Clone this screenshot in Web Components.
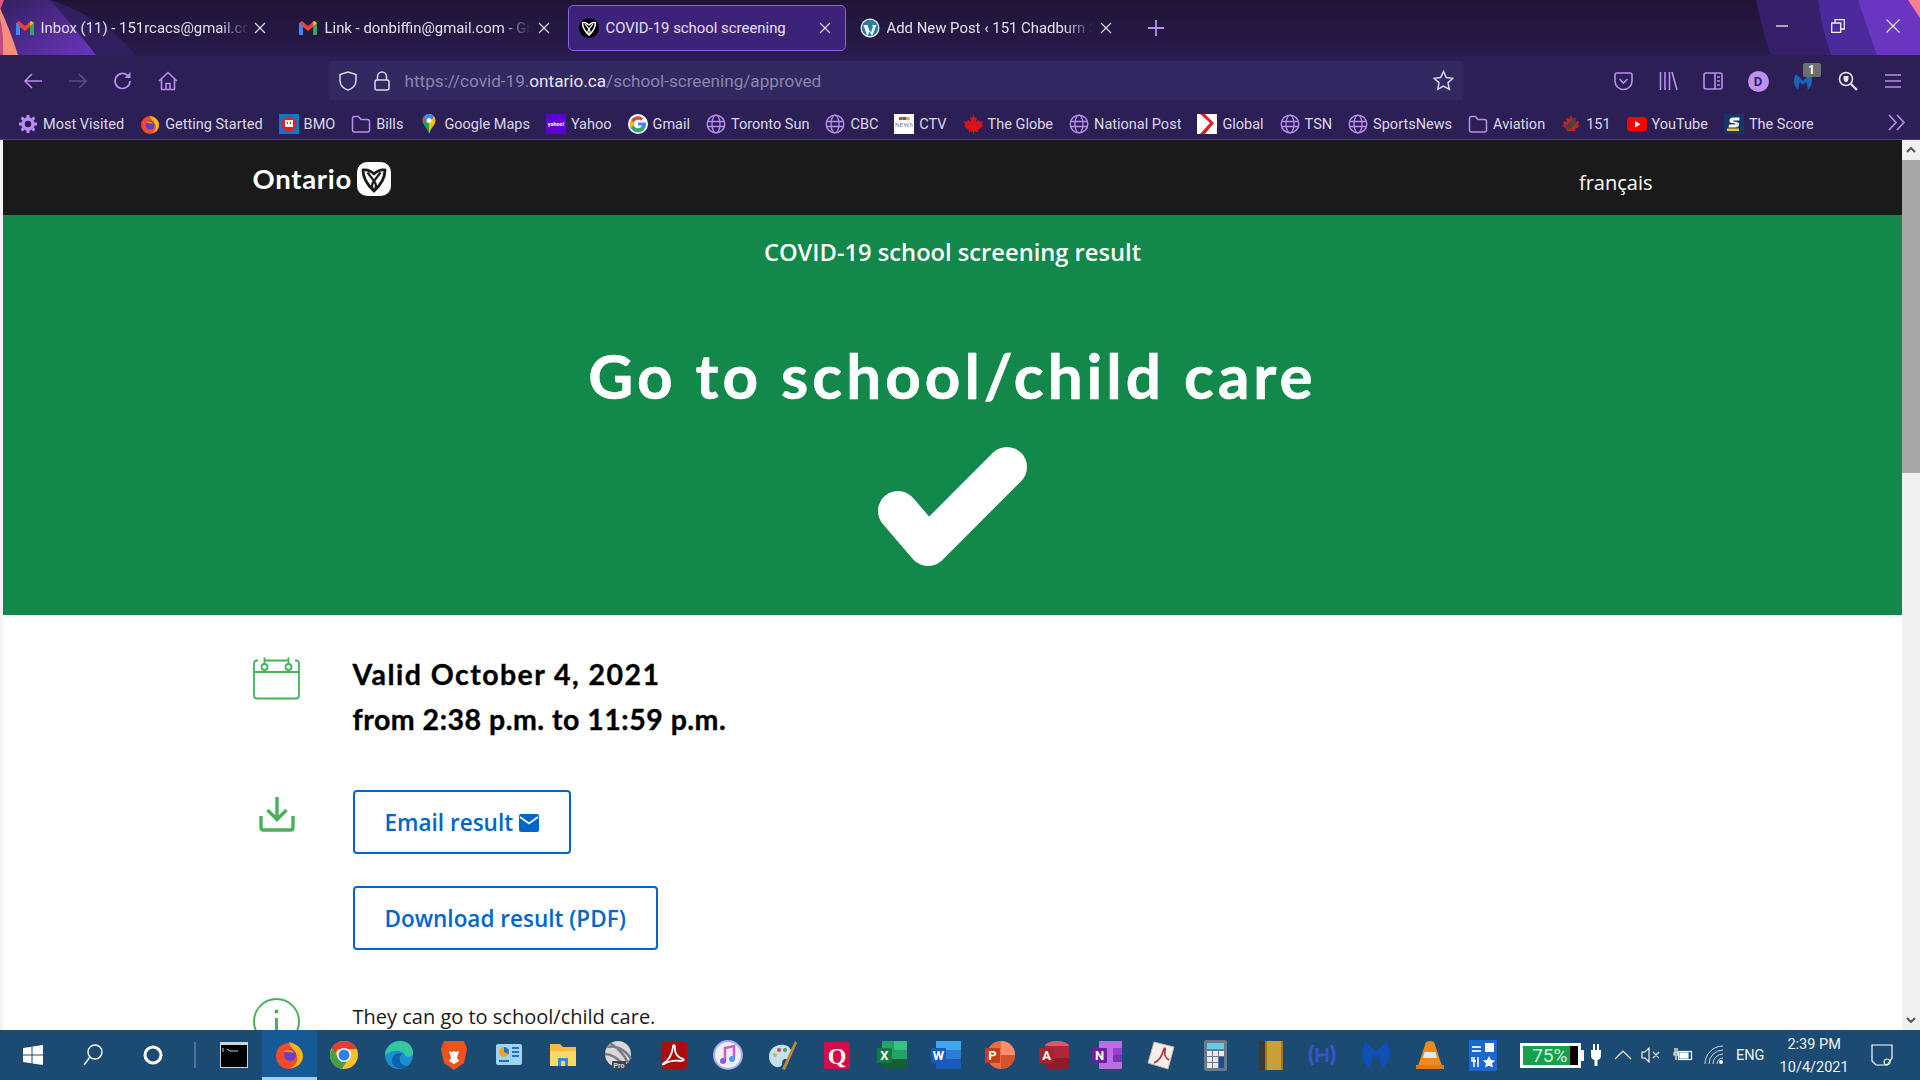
<!DOCTYPE html>
<html lang="en"><head><meta charset="utf-8"><title>COVID-19 school screening</title>
<style>
html,body{margin:0;padding:0;width:1920px;height:1080px;overflow:hidden;background:#fff}
body{display:flex;flex-direction:column;font-family:Roboto,"Noto Sans",sans-serif}
fx-titlebar{flex:none}fx-navbar{flex:none}fx-bookmarks{flex:none}on-page{flex:1;min-height:0}win-taskbar{flex:none}
.l1{letter-spacing:1.450px}
</style></head><body>

<fx-titlebar>
  <fx-tab icon="gmail">Inbox (11) - 151rcacs@gmail.com - Gmail</fx-tab>
  <fx-tab icon="gmail">Link - donbiffin@gmail.com - Gmail</fx-tab>
  <fx-tab icon="trillium" active>COVID-19 school screening</fx-tab>
  <fx-tab icon="wp">Add New Post ‹ 151 Chadburn Street — WordPress</fx-tab>
</fx-titlebar>
<fx-navbar></fx-navbar>
<fx-bookmarks>
  <fx-bookmark icon="gear">Most Visited</fx-bookmark>
  <fx-bookmark icon="firefox">Getting Started</fx-bookmark>
  <fx-bookmark icon="bmo">BMO</fx-bookmark>
  <fx-bookmark icon="folder">Bills</fx-bookmark>
  <fx-bookmark icon="maps">Google Maps</fx-bookmark>
  <fx-bookmark icon="yahoo">Yahoo</fx-bookmark>
  <fx-bookmark icon="google">Gmail</fx-bookmark>
  <fx-bookmark icon="globe">Toronto Sun</fx-bookmark>
  <fx-bookmark icon="globe">CBC</fx-bookmark>
  <fx-bookmark icon="ctv">CTV</fx-bookmark>
  <fx-bookmark icon="maple">The Globe</fx-bookmark>
  <fx-bookmark icon="globe">National Post</fx-bookmark>
  <fx-bookmark icon="global">Global</fx-bookmark>
  <fx-bookmark icon="globe">TSN</fx-bookmark>
  <fx-bookmark icon="globe">SportsNews</fx-bookmark>
  <fx-bookmark icon="folder">Aviation</fx-bookmark>
  <fx-bookmark icon="m151">151</fx-bookmark>
  <fx-bookmark icon="youtube">YouTube</fx-bookmark>
  <fx-bookmark icon="score">The Score</fx-bookmark>
</fx-bookmarks>
<on-page>
  <on-header></on-header>
  <on-hero></on-hero>
  <on-content>
    <on-row icon="calendar" style="--gap:0px;--icon-top:5px">
      <on-valid><span class="l1">Valid October 4, 2021</span><br>from 2:38 p.m. to 11:59 p.m.</on-valid>
    </on-row>
    <on-row icon="download" style="--gap:48px;--icon-top:6px">
      <on-button mail>Email result</on-button>
      <on-button>Download result (PDF)</on-button>
    </on-row>
    <on-row icon="info" style="--gap:48px;--icon-top:0px">
      <on-note>They can go to school/child care.</on-note>
    </on-row>
  </on-content>
</on-page>
<win-taskbar></win-taskbar>

<script>
const P='#b98ff0';
const g=(w,b)=>`<svg width="${w}" height="${w}" viewBox="0 0 20 20" fill="none">${b}</svg>`;
const tril=(s,sw1,sw2)=>`<path d="M6 8Q12 7 17 12Q22 7 28 8Q28 19 17 29Q6 19 6 8z" fill="none" stroke="${s}" stroke-width="${sw1}" stroke-linejoin="round"/><path d="M10.500 10.500Q14 15 17 19Q20 15 23.500 10.500M17 19Q13 24 17 29Q21 24 17 19" fill="none" stroke="${s}" stroke-width="${sw2}"/>`;
const I={
gmail:g(20,`<path d="M1 17V5l3-2 6 5 6-5 3 2v12h-4V9l-5 4-5-4v8z" fill="#ea4335"/><path d="M1 17V5l4 3v9z" fill="#4285f4"/><path d="M15 17V8l4-3v12z" fill="#34a853"/><path d="M15 8V3.500L16 3l3 2z" fill="#fbbc04"/>`),
trillium:`<svg width="20" height="20" viewBox="0 0 34 34"><circle cx="17" cy="17" r="17" fill="#000"/>${tril('#fff',2.6,2)}</svg>`,
wp:g(22,`<circle cx="10" cy="10" r="9.500" fill="#f2f6f8"/><circle cx="10" cy="10" r="8.300" fill="#2a7d9f"/><path d="M3.500 7h4l3 9 2.500-7.500L12 7h4.500L12.500 17.500h-1L10 12l-2 5.500H7z" fill="#f2f6f8"/>`),
gear:g(20,`<circle cx="10" cy="10" r="5" stroke="${P}" stroke-width="3.500"/><path d="M10 1v3M10 16v3M1 10h3M16 10h3M3.600 3.600l2.200 2.200M14.200 14.200l2.200 2.200M3.600 16.400l2.200-2.200M14.200 5.800l2.200-2.200" stroke="${P}" stroke-width="3"/>`),
firefox:g(20,`<circle cx="10" cy="11" r="9" fill="#ef4b2d"/><path d="M10 2c6 1 9 5 9 9 0 5-4 8-8 8 5-2 6-7 3-10-1-2-3-3-4-7z" fill="#ffb31a"/><circle cx="10" cy="11" r="4.500" fill="#5b3ec8"/><path d="M6 9c2-2 6-2 7 1-2-1-4-1-7-1z" fill="#ff8a1e"/>`),
bmo:g(20,`<rect width="20" height="20" fill="#0a77c2"/><circle cx="10" cy="10" r="7.500" fill="#e01f2d"/><rect x="6" y="6" width="8" height="7" fill="#fff"/><path d="M8 8h1v2H8zM11 8h1v2h-1z" fill="#e01f2d"/>`),
folder:g(20,`<path d="M1.500 4.500q0-2 2-2h4l2.500 3h6.500q2 0 2 2v8.500q0 2-2 2h-13q-2 0-2-2z" stroke="${P}" stroke-width="1.500"/>`),
maps:g(20,`<path d="M10 0c-4 0-6.500 3-6.500 6.500 0 4.500 4.500 7 6.500 13.500z" fill="#1aa260"/><path d="M10 0c4 0 6.500 3 6.500 6.500 0 4.500-4.500 7-6.500 13.500z" fill="#fbbc04"/><path d="M4.500 3L10 9l5-6c-1-2-3-3-5-3-2 0-4 1-5.500 3z" fill="#4285f4"/><path d="M4.500 3C3.800 4 3.500 5.200 3.500 6.500L8 8z" fill="#ea4335"/><circle cx="10" cy="6.500" r="2.500" fill="#fff"/>`),
yahoo:g(20,`<rect width="20" height="20" fill="#5f01d1"/><text x="10" y="12" fill="#fff" font-size="5.500" font-weight="700" font-family="Roboto,sans-serif" text-anchor="middle">yahoo!</text>`),
google:g(20,`<circle cx="10" cy="10" r="10" fill="#fff"/><path d="M16.500 8.500H10v3h3.700c-.5 1.800-2 3-3.700 3a4.500 4.500 0 1 1 2.900-8l2.200-2.200A8 8 0 1 0 18 10c0-.5 0-1-.1-1.500z" fill="#4285f4"/><path d="M3 6.200L5.700 8.300A4.500 4.500 0 0 1 12.900 6.500l2.200-2.200A8 8 0 0 0 3 6.200z" fill="#ea4335"/><path d="M2 10c0-1.400.4-2.700 1-3.800l2.700 2.100a4.500 4.500 0 0 0 0 3.400L3 13.800A8 8 0 0 1 2 10z" fill="#fbbc04"/><path d="M3 13.800l2.700-2.100c1.300 3.200 5.300 3.700 8 1.300l2.200 2.300C13 19 6 18.500 3 13.800z" fill="#34a853"/>`),
globe:g(20,`<circle cx="10" cy="10" r="8.800" stroke="${P}" stroke-width="1.400"/><ellipse cx="10" cy="10" rx="4" ry="8.800" stroke="${P}" stroke-width="1.300"/><path d="M1.500 7.500h17M1.500 12.500h17" stroke="${P}" stroke-width="1.300"/>`),
ctv:g(20,`<rect width="20" height="20" fill="#fff"/><rect x="5" y="3" width="3.500" height="3" fill="#e33"/><rect x="8.500" y="3" width="3.500" height="3" fill="#36c"/><rect x="12" y="3" width="3.500" height="3" fill="#ea2"/><text x="10" y="13" fill="#667" font-size="6.500" font-family="Liberation Serif,serif" text-anchor="middle">NEWS</text>`),
maple:g(20,`<path d="M10 0l2 4 2-1-1 5 3-2 1 2 3-1-1 4 1 1-5 4 .5 2-4.500-.5V20h-1v-2.500L5.500 18 6 16l-5-4 1-1-1-4 3 1 1-2 3 2-1-5 2 1z" fill="#d7141a"/>`),
global:g(20,`<rect width="20" height="20" fill="#fff"/><path d="M3 0l10 9-10 11h5l9-11L8 0z" fill="#d8232a"/>`),
m151:g(20,`<path d="M10 1l2 4 3-1-1 4 4-1-1 4 2 1-5 3 .5 2H5.500L6 15l-5-3 2-1-1-4 4 1-1-4 3 1z" fill="#c92028"/><path d="M4 14L15 4M7 15l8-7" stroke="#444" stroke-width="2.500"/>`),
youtube:g(20,`<rect y="3" width="20" height="14.500" rx="4" fill="#f00"/><path d="M8 7l5.500 3.200L8 13.500z" fill="#fff"/>`),
score:g(20,`<rect width="20" height="20" fill="#12366b"/><rect x="3" y="14.500" width="12" height="2.500" fill="#f4c430"/><path d="M15.500 3.500H9q-3 0-3.500 2.500t2.500 3l3 .5q1 .3.5 1H5L4.500 13.500H11q3.500 0 4-2.500t-2.500-3L9.500 7.500q-.8-.3-.2-1h6z" fill="#fff"/>`),
calendar:`<svg width="47" height="43" viewBox="0 0 47 43" fill="none" stroke="#49b05b" stroke-width="1.800"><path d="M5 3.500h-1q-3 0-3 3v32q0 3 3 3h39q3 0 3-3v-32q0-3-3-3h-1M12 3.500h23M1 15h45"/><circle cx="11.500" cy="10" r="3"/><circle cx="35.500" cy="10" r="3"/><path d="M11.500 7V.500M35.500 7V.500"/></svg>`,
download:`<svg width="36" height="36" viewBox="0 0 36 36" fill="none" stroke="#49b05b" stroke-width="3.400"><path d="M18 1v22M8.500 14L18 23.500 27.500 14"/><path d="M2 20v11.500q0 2.500 2.500 2.500h27q2.500 0 2.500-2.500V20"/></svg>`,
info:`<svg width="47" height="47" viewBox="0 0 47 47" fill="none" stroke="#49b05b" stroke-width="2"><circle cx="23.500" cy="23.500" r="22.500"/><circle cx="23.500" cy="13.500" r="2" fill="#49b05b" stroke="none"/><path d="M23.500 20v16" stroke-width="3"/></svg>`
};
function def(name,css,html){customElements.define(name,class extends HTMLElement{
  connectedCallback(){if(this.shadowRoot)return;this.attachShadow({mode:'open'}).innerHTML=`<style>${css}</style>`+(typeof html==='function'?html(this):html)}
})}
const corner=`<svg class="deco" width="1920" height="55" viewBox="0 0 1920 55">
<defs><linearGradient id="tb" x1="0" y1="0" x2="0" y2="1"><stop offset="0" stop-color="#1f1437"/><stop offset="1" stop-color="#291a4c"/></linearGradient>
<linearGradient id="pu" x1="0" y1="0" x2="1" y2="1"><stop offset="0" stop-color="#33205f"/><stop offset="1" stop-color="#6a35bf"/></linearGradient></defs>
<rect width="1920" height="55" fill="url(#tb)"/>
<path d="M0 0H52Q110 22 136 55H0z" fill="#2f1f5e"/><path d="M0 0H50Q75 28 96 55H0z" fill="url(#pu)"/>
<path d="M0 8Q10 30 18 55H0z" fill="#f88d78"/><path d="M0 18Q4 35 3 55H0z" fill="#c2488a"/><path d="M0 0h4L0 10z" fill="#e2557e"/>
<path d="M1756 0Q1762 30 1771 55H1920V0z" fill="#371f6b"/><path d="M1818 0Q1822 30 1831 55H1920V0z" fill="#4b2a9b"/>
<path d="M1858 0Q1868 30 1877 55H1920V0z" fill="#6a35c0"/><path d="M1908 0L1920 18V0z" fill="#f77f8f"/></svg>`;
def('fx-titlebar',`:host{display:flex;position:relative;height:55px;padding-left:5px;box-sizing:border-box;overflow:hidden}
.deco{position:absolute;left:0;top:0}
.plus{position:relative;margin-left:11px;height:55px;display:flex;align-items:center;width:34px;justify-content:center}
.win{position:absolute;right:0;top:0;display:flex}
.win span{display:flex;align-items:center;justify-content:center;width:56px;height:52px}
.win span:last-child{width:54px}`,
corner+`<slot></slot><div class="plus"><svg width="16" height="16" fill="none" stroke="${P}" stroke-width="1.800"><path d="M8 0v16M0 8h16"/></svg></div>
<div class="win"><span><svg width="14" height="14" stroke="#eee" stroke-width="1.300"><path d="M1 7h12"/></svg></span>
<span><svg width="14" height="14" fill="none" stroke="#eee" stroke-width="1.300"><path d="M.7 4h9v9.300h-9zM4 4V.7h9.300V10H10"/></svg></span>
<span><svg width="14" height="14" stroke="#eee" stroke-width="1.100"><path d="M.5.500l13 13M13.500.500l-13 13"/></svg></span></div>`);
def('fx-tab',`:host{position:relative;display:flex;align-items:center;box-sizing:border-box;width:278px;height:46px;margin:5px 1.500px 0;padding:0 14px 0 10px;color:#e4e0ee;font-size:14.900px;border:1px solid transparent;border-radius:5px;gap:7px}
:host(:first-child){margin-left:-1px;margin-right:4px;width:277px;gap:5.500px}
:host([active]){background:#3d2279;border-color:#8e5fe0}
.i{flex:none;display:flex;width:20px;height:22px;align-items:center;justify-content:center}
.t{flex:1;min-width:0;white-space:nowrap;overflow:hidden;-webkit-mask-image:linear-gradient(90deg,#000 86%,transparent 100%);mask-image:linear-gradient(90deg,#000 86%,transparent 100%)}
:host([active]) .t{-webkit-mask-image:none;mask-image:none}
.x{flex:none;display:flex}`,
h=>`<span class="i">${I[h.getAttribute('icon')]}</span><span class="t"><slot></slot></span><span class="x"><svg width="12" height="12" stroke="#e4e0ee" stroke-width="1.100"><path d="M1 1l10 10M11 1L1 11"/></svg></span>`);
const nb=s=>`<span class="b">${s}</span>`;
def('fx-navbar',`:host{display:flex;align-items:flex-start;height:55px;background:#2b1f56;padding:6px 4.500px 0 10.500px;box-sizing:border-box}
.b{flex:none;width:45px;height:40px;display:flex;align-items:center;justify-content:center;position:relative}
.url{flex:1;height:39px;margin:0 138px;background:#322963;border-radius:3px;display:flex;align-items:center;box-sizing:border-box;padding-left:10px;font-size:17.150px;color:#8c84ab;white-space:nowrap;position:relative}
.url b{font-weight:400;color:#e9e6f3}.txt{margin-left:15px}
.sh{display:flex;margin-right:17px}.lk{display:flex}
.star{position:absolute;right:9px;top:9px;display:flex}
.d{width:21px;height:21px;border-radius:50%;background:#c08ff2;color:#2b1f56;font:700 13px Roboto,sans-serif;display:flex;align-items:center;justify-content:center}
.badge{position:absolute;left:22px;top:2px;width:18px;height:14px;background:#6e6e6e;border-radius:2px;color:#fff;font:700 12px/14px Roboto,sans-serif;text-align:center}`,
nb(`<svg width="20" height="18" fill="none" stroke="${P}" stroke-width="1.500"><path d="M19 9H2M9 2L2 9l7 7"/></svg>`)+
nb(`<svg width="20" height="18" fill="none" stroke="#5e4a91" stroke-width="1.500"><path d="M1 9h17M11 2l7 7-7 7"/></svg>`)+
nb(`<svg width="20" height="20" fill="none" stroke="${P}" stroke-width="1.700"><path d="M17 10a7.500 7.500 0 1 1-2.500-5.600"/><path d="M17.500 1v6h-6z" fill="${P}" stroke="none"/></svg>`)+
nb(`<svg width="20" height="20" fill="none" stroke="${P}" stroke-width="1.600"><path d="M1 10l9-8.500 9 8.500M3.500 8v10.500h13V8M8 18.500v-6h4v6"/></svg>`)+
`<div class="url"><span class="sh"><svg width="18" height="20" fill="none" stroke="#ddd8ec" stroke-width="1.500"><path d="M9 1l8 2.500v6c0 5-4 8.500-8 9.500-4-1-8-4.500-8-9.500v-6z"/></svg></span>
<span class="lk"><svg width="16" height="20" fill="none" stroke="#ddd8ec" stroke-width="1.500"><path d="M3.500 9V5.500a4.500 4.500 0 0 1 9 0V9"/><rect x="1" y="9" width="14" height="10" rx="2"/></svg></span>
<span class="txt">https://covid-19.<b>ontario.ca</b>/school-screening/approved</span>
<span class="star"><svg width="21" height="21" fill="none" stroke="#ddd8ec" stroke-width="1.500"><path d="M10.500 1.500l2.800 6 6.500.8-4.800 4.500 1.300 6.500-5.800-3.300-5.800 3.300 1.300-6.500L1.200 8.300l6.500-.8z"/></svg></span></div>`+
nb(`<svg width="19" height="19" fill="none" stroke="${P}" stroke-width="1.600"><path d="M1 3q0-2 2-2h13q2 0 2 2v6a8.500 8.500 0 0 1-17 0z"/><path d="M5.500 7l4 4 4-4"/></svg>`)+
nb(`<svg width="19" height="20" fill="none" stroke="${P}" stroke-width="1.600"><path d="M1.500 1v18M6 1v18M10.500 1v18M13 1l5 18"/></svg>`)+
nb(`<svg width="20" height="18" fill="none" stroke="${P}" stroke-width="1.600"><rect x="1" y="1" width="18" height="16" rx="2"/><path d="M12 1v16"/><path d="M14 5h3M14 9h3M14 13h3"/></svg>`)+
nb(`<span class="d">D</span>`)+
nb(`<svg width="20" height="20" style="margin-top:2px"><path d="M3 2c-3 4-3 11 2 16 1-3 .5-6 2-8l3 3 3-3c1.500 2 1 5 2 8 5-5 5-12 2-16-2 2-5 5-7 7-2-2-5-5-7-7z" fill="#1c63b8"/></svg><span class="badge">1</span>`)+
nb(`<svg width="20" height="20" fill="none" stroke="#e8e4f2" stroke-width="1.600"><circle cx="8" cy="8" r="6.500"/><path d="M5.500 5h5v3q0 2.500-2.500 3.500Q5.500 10.500 5.500 8z" fill="#e8e4f2" stroke="none"/><path d="M13 13l6 6" stroke-width="2.200"/></svg>`)+
nb(`<svg width="18" height="16" stroke="${P}" stroke-width="1.700"><path d="M1 2h16M1 8h16M1 14h16"/></svg>`));
def('fx-bookmarks',`:host{display:flex;position:relative;align-items:center;height:30px;background:#2b1f56;padding-left:10px;box-shadow:inset 0 -1px 0 #4b4278}
.more{position:absolute;left:1888px;top:4px;display:flex}`,
`<slot></slot><span class="more"><svg width="18" height="17" fill="none" stroke="${P}" stroke-width="1.600"><path d="M1 1l7 7.500L1 16M9 1l7 7.500L9 16"/></svg></span>`);
def('fx-bookmark',`:host{display:flex;align-items:center;gap:5px;padding:0 8px 2px;box-sizing:border-box;height:30px;color:#dcd7e8;font-size:14.500px;white-space:nowrap}
.i{display:flex;width:20px;height:20px}`,h=>`<span class="i">${I[h.getAttribute('icon')]}</span><slot></slot>`);
def('on-page',`:host{display:flex;background:#fff;overflow:hidden;position:relative}
.edge{flex:none;width:3px;background:#f4f4f4}.main{flex:1;min-width:0;overflow:hidden}
.sb{flex:none;width:18px;background:#f0f0f0;display:flex;flex-direction:column;align-items:center}
.arr{flex:none;height:20px;width:100%;display:flex;align-items:center;justify-content:center}
.th{flex:none;height:313px;width:100%;background:#a8a8a8}.sp{flex:1}`,
`<div class="edge"></div><div class="main"><slot></slot></div><div class="sb"><div class="arr"><svg width="10" height="6" fill="none" stroke="#555" stroke-width="2"><path d="M1 5l4-4 4 4"/></svg></div><div class="th"></div><div class="sp"></div><div class="arr"><svg width="10" height="6" fill="none" stroke="#555" stroke-width="2"><path d="M1 1l4 4 4-4"/></svg></div></div>`);
def('on-header',`:host{display:flex;align-items:flex-start;justify-content:space-between;height:75px;background:#1a1a1a;padding:0 249.500px;color:#fff}
.logo{display:flex;align-items:center;gap:5px;margin-top:22px;font:700 27.500px/34px Lato,sans-serif;letter-spacing:.7px}
.fr{font:400 20px/27px "Open Sans",sans-serif;margin-top:29px}`,
`<div class="logo"><span>Ontario</span><svg width="34" height="34" viewBox="0 0 34 34"><rect width="34" height="34" rx="10" fill="#fff"/>${tril('#1a1a1a',2.8,2.2)}</svg></div><div class="fr">français</div>`);
def('on-hero',`:host{display:flex;flex-direction:column;align-items:center;box-sizing:border-box;height:400px;background:#12884a;color:#fff;padding-top:19px}
.s{font:600 23.700px/36px "Open Sans",sans-serif}
h1{margin:69px 0 0;font:700 62px/72px Lato,sans-serif;letter-spacing:4px;-webkit-text-stroke:.6px #fff}
svg{margin:35px 0 0 3px;display:block}`,
`<div class="s">COVID-19 school screening result</div><h1>Go to school/child care</h1><svg width="160" height="120" viewBox="0 0 160 120"><path d="M24 65l30 35L133 21" fill="none" stroke="#fff" stroke-width="40" stroke-linecap="round" stroke-linejoin="round"/></svg>`);
def('on-content',`:host{display:flex;flex-direction:column;padding:37px 249.500px 0}`,`<slot></slot>`);
def('on-row',`:host{display:flex;margin-top:var(--gap,0)}
.i{flex:none;width:100px;box-sizing:border-box;padding:var(--icon-top,0) 0 0 0}
.c{width:48px;display:flex;justify-content:center}
.b{flex:1;display:flex;flex-direction:column;align-items:flex-start;gap:32px}`,
h=>`<div class="i"><div class="c">${I[h.getAttribute('icon')]}</div></div><div class="b"><slot></slot></div>`);
def('on-valid',`:host{display:block;font:700 28.500px/45px Lato,sans-serif;color:#000;letter-spacing:.5px;-webkit-text-stroke:.35px #000}`,`<slot></slot>`);
def('on-note',`:host{display:block;font:400 20px/30px "Open Sans",sans-serif;color:#1a1a1a;margin-top:4px}`,`<slot></slot>`);
def('on-button',`:host{display:flex;align-items:center;gap:6px;box-sizing:border-box;height:64px;padding:2px 30px 0;border:2px solid #0066cc;border-radius:4px;color:#0066cc;font:600 22.500px/32px "Open Sans",sans-serif;background:#fff}
svg{display:block}`,
h=>`<slot></slot>`+(h.hasAttribute('mail')?`<svg width="20" height="18" viewBox="0 0 20 18"><rect width="20" height="18" rx="2" fill="#0066cc"/><path d="M1 3l9 6.500L19 3" fill="none" stroke="#fff" stroke-width="1.800"/></svg>`:''));
const ts=(s)=>`<svg width="32" height="32" viewBox="0 0 32 32">${s}</svg>`;
const lbl=(x,y,t,c='#fff',z=13,f='Roboto')=>`<text x="${x}" y="${y}" fill="${c}" font-size="${z}" font-weight="700" font-family="${f},sans-serif" text-anchor="middle">${t}</text>`;
const apps=[
ts(`<circle cx="16" cy="17" r="13" fill="#ef4b2d"/><path d="M16 3c9 2 14 8 14 14 0 7-6 12-13 12 8-3 9-11 5-16-2-3-5-5-6-10z" fill="#ffb31a"/><circle cx="17" cy="16" r="6" fill="#6b3fc6"/><path d="M10 13c3-3 9-3 11 1-3-1-6-1-11-1z" fill="#ff8a1e"/>`),
ts(`<circle cx="16" cy="16" r="14" fill="#fbc02d"/><path d="M16 2a14 14 0 0 1 12.500 8H16z" fill="#e53935"/><path d="M3.800 9A14 14 0 0 1 16 2v8h-6l-3.800 6z" fill="#e53935"/><path d="M2 16a14 14 0 0 0 12 13.800l6-9H11L5 9a14 14 0 0 0-3 7z" fill="#43a047"/><circle cx="16" cy="16" r="7" fill="#fff"/><circle cx="16" cy="16" r="5.500" fill="#2f80ed"/>`),
ts(`<circle cx="16" cy="16" r="14" fill="#1b8fd0"/><path d="M2 16C3 6 12 2 18 2c7 0 12 5 12 12 0 4-6 5-8 2-2-5-12-6-20 0z" fill="#34c8a0"/><path d="M9 22c0-7 6-9 11-7-5 1-5 12 5 12-5 4-16 3-16-5z" fill="#0e5fb0"/>`),
ts(`<path d="M6 2h20l3 8-3 14-10 7-10-7L3 10z" fill="#f2511d"/><path d="M11 12l3 1 2-1 2 1 3-1-2 7 2 3-5 3-5-3 2-3z" fill="#fff"/>`),
ts(`<rect x="3" y="5" width="26" height="21" rx="2" fill="#9fd4f5"/><circle cx="11" cy="13" r="5" fill="#f4a11c"/><path d="M11 13V8a5 5 0 0 1 4.500 7z" fill="#1f72c8"/><path d="M19 9h7M19 13h7M19 17h7M6 22h10" stroke="#1f72c8" stroke-width="2"/>`),
ts(`<path d="M3 5h10l3 3h13v19H3z" fill="#f5bd3a"/><path d="M3 12h26v15H3z" fill="#ffd766"/><path d="M11 27v-8h10v8h-3v-5h-4v5z" fill="#2d8ee0"/>`),
ts(`<circle cx="16" cy="15" r="13" fill="#d8d8dc"/><path d="M5 8c8-2 18 2 24 12M8 4c6 4 14 10 18 20M3 15c5 0 14 4 19 12" stroke="#7a7d85" stroke-width="2.500" fill="none"/><rect x="10" y="22" width="14" height="8" rx="1" fill="#444"/>`+lbl(17,29,'Pro','#ddd',7)),
ts(`<rect x="4" y="3" width="26" height="27" rx="3" fill="#a80f0f"/><path d="M7 24c4-2 8-8 9-16 0-3 2-2 2 0-1 6 3 11 8 12 2 1 0 2-2 2-6-1-12 0-17 3-1 1-2 0 0-1z" fill="none" stroke="#fff" stroke-width="1.800"/>`),
ts(`<circle cx="16" cy="16" r="14" fill="#eee" stroke="#a6a8f0" stroke-width="2"/><path d="M13 22V9l9-2v13" fill="none" stroke="#d05ac8" stroke-width="2.500"/><circle cx="11" cy="22" r="3" fill="#8060e0"/><circle cx="20" cy="20" r="3" fill="#4aa0e8"/>`),
ts(`<path d="M2 18c0-9 8-13 15-12 7 1 9 7 6 12-2 3-5 1-7 3s1 6-4 7C7 29 2 24 2 18z" fill="#c5e0f0"/><circle cx="8" cy="16" r="2" fill="#e8b020"/><circle cx="12" cy="11" r="2" fill="#d0463a"/><circle cx="18" cy="11" r="2" fill="#40a050"/><path d="M28 2l2 2-12 27-3-1z" fill="#c08a3c"/>`),
ts(`<rect x="3" y="3" width="26" height="27" rx="2" fill="#d40d47"/>`+lbl(16,25,'Q','#fff',24,'Liberation Serif')),
ts(`<rect x="6" y="2" width="25" height="28" rx="1" fill="#21a366"/><rect x="18" y="2" width="13" height="9" fill="#33c481"/><rect x="6" y="20" width="25" height="10" fill="#185c37"/><rect x="1" y="9" width="15" height="15" rx="1" fill="#107c41"/>`+lbl(8.500,21,'X')),
ts(`<rect x="6" y="2" width="25" height="28" rx="1" fill="#2b7cd3"/><rect x="6" y="2" width="25" height="9" fill="#41a5ee"/><rect x="6" y="20" width="25" height="10" fill="#185abd"/><rect x="1" y="9" width="15" height="15" rx="1" fill="#185abd"/>`+lbl(8.500,21,'W')),
ts(`<circle cx="17" cy="16" r="14" fill="#ed6c47"/><path d="M17 2a14 14 0 0 1 14 14H17z" fill="#ff8f6b"/><path d="M17 16h14a14 14 0 0 1-14 14z" fill="#d35230"/><rect x="1" y="9" width="15" height="15" rx="1" fill="#c43e1c"/>`+lbl(8.500,21,'P')),
ts(`<ellipse cx="19" cy="7" rx="12" ry="5" fill="#d85a6b"/><path d="M7 7v19c0 3 5 5 12 5s12-2 12-5V7z" fill="#b3263a"/><path d="M7 19v7c0 3 5 5 12 5s12-2 12-5v-7z" fill="#8f1b2c"/><rect x="1" y="9" width="15" height="15" rx="1" fill="#a4262c"/>`+lbl(8.500,21,'A')),
ts(`<rect x="8" y="2" width="23" height="28" rx="1" fill="#ba6fe0"/><rect x="22" y="9" width="9" height="7" fill="#9a3fd0"/><rect x="22" y="16" width="9" height="7" fill="#8230b8"/><rect x="1" y="9" width="15" height="15" rx="1" fill="#6a1f9c"/>`+lbl(8.500,21,'N')),
ts(`<path d="M9 3l20 5-6 22-20-6z" fill="#f5efe8" stroke="#c8b0a8"/><path d="M9 24c5-2 8-7 10-14 1-2 2 0 1 2-1 4 1 7 4 9" fill="none" stroke="#a8323e" stroke-width="1.600"/>`),
ts(`<rect x="5" y="1" width="23" height="31" rx="2" fill="#6c7a86"/><rect x="8" y="4" width="17" height="6" fill="#5dd0ee"/><g fill="#e6eaee"><rect x="8" y="12" width="5" height="5"/><rect x="14" y="12" width="5" height="5"/><rect x="20" y="12" width="5" height="5"/><rect x="8" y="18" width="5" height="5"/><rect x="14" y="18" width="5" height="5"/><rect x="8" y="24" width="5" height="5"/><rect x="14" y="24" width="5" height="5"/></g><rect x="20" y="18" width="5" height="11" fill="#124f9a"/>`),
ts(`<rect x="6" y="2" width="24" height="29" fill="#9c7a1e"/><rect x="6" y="2" width="6" height="29" fill="#3c3a32"/><rect x="14" y="2" width="14" height="29" fill="#c89f3a"/>`),
ts(`<path d="M7 6c-4 6-4 14 0 20M25 6c4 6 4 14 0 20M11 9v14M21 9v14M11 16h10" fill="none" stroke="#3a55c8" stroke-width="3"/>`),
ts(`<path d="M6 3C0 10 0 22 10 30c2-5 1-10 3-14l3 4 3-4c2 4 1 9 3 14C32 22 32 10 26 3c-4 3-7 7-10 10C13 10 10 6 6 3z" fill="#0f4fb8"/>`),
ts(`<path d="M16 2l4 1 8 24H4L12 3z" fill="#f08a1a"/><path d="M10.500 13h11l1.500 6H9z" fill="#e8e8e8"/><path d="M2 26h28v4H2z" fill="#e07a10"/>`),
ts(`<rect x="2" y="1" width="28" height="31" rx="1" fill="#1a68d0"/><path d="M5 8h9M5 12h9" stroke="#d8e8ff" stroke-width="2"/><rect x="18" y="4" width="9" height="9" fill="#fff"/><path d="M7 18v10M11 18v10M5 18v4h4" stroke="#fff" stroke-width="1.500" fill="none"/><path d="M22 17l2 4 4 .5-3 3 1 4-4-2-4 2 1-4-3-3 4-.5z" fill="#fff"/>`)
];
def('task-icon',`:host{flex:none;display:flex;align-items:center;justify-content:center;width:53.700px;height:50px;box-sizing:border-box}
:host([wide]){width:54.800px}
:host([on]){background:#155a96;box-shadow:inset 0 -3px 0 #9fd0f5}`,`<slot></slot>`);
def('win-taskbar',`:host{display:flex;align-items:center;height:50px;background:#1b4a72;padding-left:3px;color:#f0f4f8;font-family:Roboto,sans-serif}
.s{flex:none;width:60px;height:50px;display:flex;align-items:center;justify-content:center}
.sep{flex:none;width:23px;display:flex;justify-content:center}.sep i{display:block;width:2px;height:26px;background:#4d7596}
.term{flex:none;width:56px;display:flex;justify-content:center}
.row{display:flex;flex:none}
.t{flex:none;display:flex;align-items:center;justify-content:center;height:50px;box-sizing:border-box}
.bat{flex:none;margin-left:10px;width:65px;height:25px;display:flex;align-items:center}
.bb{position:relative;box-sizing:border-box;width:61px;height:25px;border:3px solid #fff;background:linear-gradient(90deg,#16a04c 0,#16a04c 47px,#000 47px);color:#d6f5df;font:400 19px/19px Roboto,sans-serif;padding-left:9px}
.nub{width:3px;height:11px;background:#fff}
.eng{font-size:14.500px}.clock{font-size:14.500px;line-height:23px;text-align:center;padding-top:2px}`,
`<div class="s"><svg width="20" height="20"><path d="M0 3l8.500-1.200v7.700H0zM9.500 1.600L20 0v9.500H9.500zM0 10.500h8.500v7.700L0 17zM9.500 10.500H20V20L9.500 18.400z" fill="#fff"/></svg></div>
<div class="s"><svg width="20" height="22" fill="none" stroke="#fff" stroke-width="1.400"><circle cx="12" cy="8" r="7"/><path d="M7 13l-6 8"/></svg></div>
<div class="s"><svg width="20" height="20" fill="none" stroke="#fff" stroke-width="3"><circle cx="10" cy="10" r="8"/></svg></div>
<div class="sep"><i></i></div>
<div class="term"><svg width="28" height="26"><rect width="28" height="26" fill="#d0d4d8"/><rect x="1" y="3" width="26" height="22" fill="#000"/><path d="M3 6v4M7 7l3 2M10 9h8" stroke="#ccc"/></svg></div>
<div class="row"><slot></slot></div>
<div class="bat"><div class="bb">75%</div><span class="nub"></span></div>
<div class="t" style="width:20px;margin-left:1px"><svg width="12" height="22" fill="#fff"><path d="M3 0h2v6H3zM7 0h2v6H7zM1 6h10v6q0 3-3.500 4v6h-3v-6Q1 15 1 12z"/></svg></div>
<div class="t" style="width:28px;margin-left:3px"><svg width="18" height="10" fill="none" stroke="#fff" stroke-width="1.200"><path d="M1 9l8-8 8 8"/></svg></div>
<div class="t" style="width:28px"><svg width="20" height="16" fill="none" stroke="#fff" stroke-width="1.100"><path d="M1 5h3l4-4v14l-4-4H1zM12 5l6 6M18 5l-6 6"/></svg></div>
<div class="t" style="width:36px"><svg width="20" height="16" fill="none" stroke="#fff" stroke-width="1.200"><rect x="5.500" y="4.500" width="13" height="8"/><rect x="7" y="6" width="8" height="5" fill="#fff"/><path d="M2 1v5M4 1v5M1 6h4v2H1zM3 8v5"/></svg></div>
<div class="t" style="width:31px;padding-right:5px"><svg width="20" height="20" fill="none" stroke="#cfd8e0"><path d="M1 19A18 18 0 0 1 19 1M5 19A14 14 0 0 1 19 5M9 19A10 10 0 0 1 19 9M13 19a6 6 0 0 1 6-6"/><circle cx="17" cy="17" r="2" fill="#fff" stroke="none"/></svg></div>
<div class="t eng" style="width:36px">ENG</div>
<div class="t clock" style="width:92px"><div>2:39 PM<br>10/4/2021</div></div>
<div class="t" style="width:44px"><svg width="22" height="22" fill="none" stroke="#fff" stroke-width="1.200"><path d="M1 1h20v13l-5 7H5l-4-4z"/><path d="M16 15a3 3 0 1 0 .1 0"/></svg></div>`);
const tb=document.querySelector('win-taskbar');
apps.forEach((s,i)=>{const e=document.createElement('task-icon');if(i===0)e.setAttribute('on','');if(i<12)e.setAttribute('wide','');e.innerHTML=s;tb.appendChild(e)});
</script>
</body></html>
